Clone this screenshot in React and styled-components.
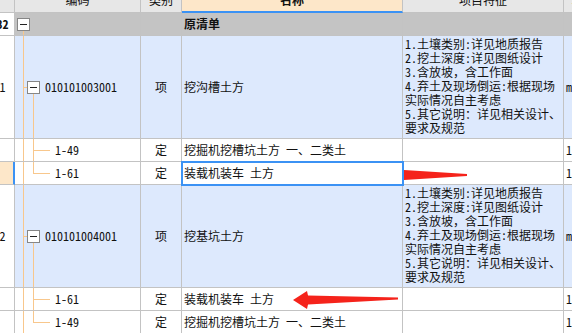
import React from 'react';
import styled, { createGlobalStyle, css } from 'styled-components';

const GlobalStyle = createGlobalStyle`
  html, body { margin: 0; padding: 0; background: #fff; }
  #root { width: 572px; height: 333px; overflow: hidden; }
`;

const FONT = `"Noto Sans Mono CJK SC", "Noto Sans CJK SC", "DejaVu Sans Mono", monospace`;

const C = {
  grid: '#c3c3c3',
  header: '#e7e7e7',
  group: '#c4c4c4',
  item: '#dde9fd',
  peach: '#fde7c9',
  blue: '#3b92f4',
  tree: '#f8c78c',
  box: '#868686',
  red: '#f5231b',
};

const HEIGHTS = { header: 25, group: 23, item: 103, sub: 23 };
const BG = { header: C.header, group: C.group, item: C.item, sub: '#fff' };

const Page = styled.div`
  position: relative;
  width: 572px;
  height: 333px;
  overflow: hidden;
  font-family: ${FONT};
  font-size: 12px;
  color: #111;
`;

const Table = styled.div`
  margin: -12px 0 0 -9px;
  width: max-content;
`;

const Row = styled.div`
  display: grid;
  grid-template-columns: 24px 126px 41px 221px 161px 40px;
  height: ${(p) => HEIGHTS[p.$kind]}px;
`;

const Cell = styled.div`
  box-sizing: border-box;
  border-right: 1px solid ${C.grid};
  border-bottom: 1px solid ${C.grid};
  background: ${(p) => BG[p.$kind]};
  display: flex;
  align-items: center;
  min-width: 0;
  overflow: hidden;
  white-space: nowrap;
  padding: 0 2px;
  line-height: 14px;
`;

const NumCell = styled(Cell)`
  justify-content: center;
  padding: 0;
  background: ${(p) => (p.$kind === 'header' ? C.header : '#fff')};
  font-weight: ${(p) => (p.$bold ? 700 : 400)};
  ${(p) =>
    p.$selected &&
    css`
      background: ${C.peach};
      border-right: 2px solid ${C.blue};
    `}
`;

const HeadCell = styled(Cell)`
  justify-content: center;
  ${(p) =>
    p.$active &&
    css`
      background: ${C.peach};
      border-bottom: 2px solid ${C.blue};
      font-weight: 700;
    `}
`;

const TypeCell = styled(Cell)`
  justify-content: center;
`;

const NameCell = styled(Cell)`
  font-weight: ${(p) => (p.$bold ? 700 : 400)};
  ${(p) =>
    p.$selected &&
    css`
      position: relative;
      z-index: 1;
      outline: 2px solid ${C.blue};
      outline-offset: -1px;
    `}
`;

const FeatureCell = styled(Cell)`
  flex-direction: column;
  align-items: flex-start;
  justify-content: flex-start;
  padding: 1px 2px 0;
`;

const FeatureLine = styled.div`
  white-space: nowrap;
  line-height: 14px;
`;

const CodeCell = styled(Cell)`
  position: relative;
  padding-left: ${(p) => p.$pad}px;
`;

const VLine = styled.span`
  position: absolute;
  left: ${(p) => p.$x}px;
  width: 1px;
  top: ${(p) => p.$top || '0'};
  bottom: ${(p) => p.$bottom || '0'};
  background: ${C.tree};
`;

const HLine = styled.span`
  position: absolute;
  left: ${(p) => p.$x}px;
  width: ${(p) => p.$w}px;
  top: 50%;
  height: 1px;
  background: ${C.tree};
`;

const Toggle = styled.span`
  position: relative;
  z-index: 1;
  box-sizing: border-box;
  flex: none;
  width: 13px;
  height: 13px;
  border: 1px solid ${C.box};
  background: #fff;
  &::after {
    content: '';
    position: absolute;
    left: 2px;
    right: 2px;
    top: 5px;
    height: 1px;
    background: #222;
  }
`;

const CodeText = styled.span`
  margin-left: ${(p) => p.$gap || 0}px;
`;

const Overlay = styled.svg`
  position: absolute;
  left: 0;
  top: 0;
  width: 572px;
  height: 333px;
  pointer-events: none;
`;

const FEATURES = [
  '1.土壤类别:详见地质报告',
  '2.挖土深度:详见图纸设计',
  '3.含放坡，含工作面',
  '4.弃土及现场倒运:根据现场',
  '实际情况自主考虑',
  '5.其它说明：详见相关设计、',
  '要求及规范',
];

const ROWS = [
  { kind: 'item', num: '1', code: '010101003001', type: '项', name: '挖沟槽土方', tail: 'm3' },
  { kind: 'sub', code: '1-49', type: '定', name: '挖掘机挖槽坑土方 一、二类土', tail: '1' },
  { kind: 'sub', code: '1-61', type: '定', name: '装载机装车 土方', tail: '1', selected: true, last: true },
  { kind: 'item', num: '2', code: '010101004001', type: '项', name: '挖基坑土方', tail: 'm3' },
  { kind: 'sub', code: '1-61', type: '定', name: '装载机装车 土方', tail: '1' },
  { kind: 'sub', code: '1-49', type: '定', name: '挖掘机挖槽坑土方 一、二类土', tail: '1', last: true },
];

function ItemRow({ row }) {
  return (
    <Row $kind="item">
      <NumCell $kind="item">{row.num}</NumCell>
      <CodeCell $kind="item" $pad={12}>
        <VLine $x={8} />
        <HLine $x={8} $w={4} />
        <VLine $x={18} $top="calc(50% + 7px)" />
        <Toggle />
        <CodeText $gap={5}>{row.code}</CodeText>
      </CodeCell>
      <TypeCell $kind="item">{row.type}</TypeCell>
      <NameCell $kind="item">{row.name}</NameCell>
      <FeatureCell $kind="item">
        {FEATURES.map((l) => (
          <FeatureLine key={l}>{l}</FeatureLine>
        ))}
      </FeatureCell>
      <Cell $kind="item">{row.tail}</Cell>
    </Row>
  );
}

function SubRow({ row }) {
  return (
    <Row $kind="sub">
      <NumCell $kind="sub" $selected={row.selected} />
      <CodeCell $kind="sub" $pad={40}>
        <VLine $x={8} />
        <VLine $x={18} $bottom={row.last ? 'calc(50% - 1px)' : '0'} />
        <HLine $x={18} $w={17} />
        <CodeText>{row.code}</CodeText>
      </CodeCell>
      <TypeCell $kind="sub">{row.type}</TypeCell>
      <NameCell $kind="sub" $selected={row.selected}>
        {row.name}
      </NameCell>
      <Cell $kind="sub" />
      <Cell $kind="sub">{row.tail}</Cell>
    </Row>
  );
}

export default function App() {
  return (
    <Page>
      <GlobalStyle />
      <Table>
        <Row $kind="header">
          <NumCell $kind="header" />
          <HeadCell $kind="header">编码</HeadCell>
          <HeadCell $kind="header">类别</HeadCell>
          <HeadCell $kind="header" $active>
            名称
          </HeadCell>
          <HeadCell $kind="header">项目特征</HeadCell>
          <HeadCell $kind="header">单位</HeadCell>
        </Row>
        <Row $kind="group">
          <NumCell $kind="group" $bold>
            32
          </NumCell>
          <CodeCell $kind="group" $pad={2}>
            <VLine $x={8} $top="calc(50% + 7px)" />
            <Toggle />
          </CodeCell>
          <TypeCell $kind="group" />
          <NameCell $kind="group" $bold>
            原清单
          </NameCell>
          <Cell $kind="group" />
          <Cell $kind="group" />
        </Row>
        {ROWS.map((row, i) =>
          row.kind === 'item' ? <ItemRow key={i} row={row} /> : <SubRow key={i} row={row} />
        )}
      </Table>
      <Overlay viewBox="0 0 572 333">
        <polygon
          fill={C.red}
          points="388,174 403,165 404,170 467,174 467,176 404,180 403,184"
        />
        <polygon
          fill={C.red}
          points="293,300 307,291 308,295.5 398,297.5 398,299.5 308,304.5 307,309"
        />
      </Overlay>
    </Page>
  );
}
